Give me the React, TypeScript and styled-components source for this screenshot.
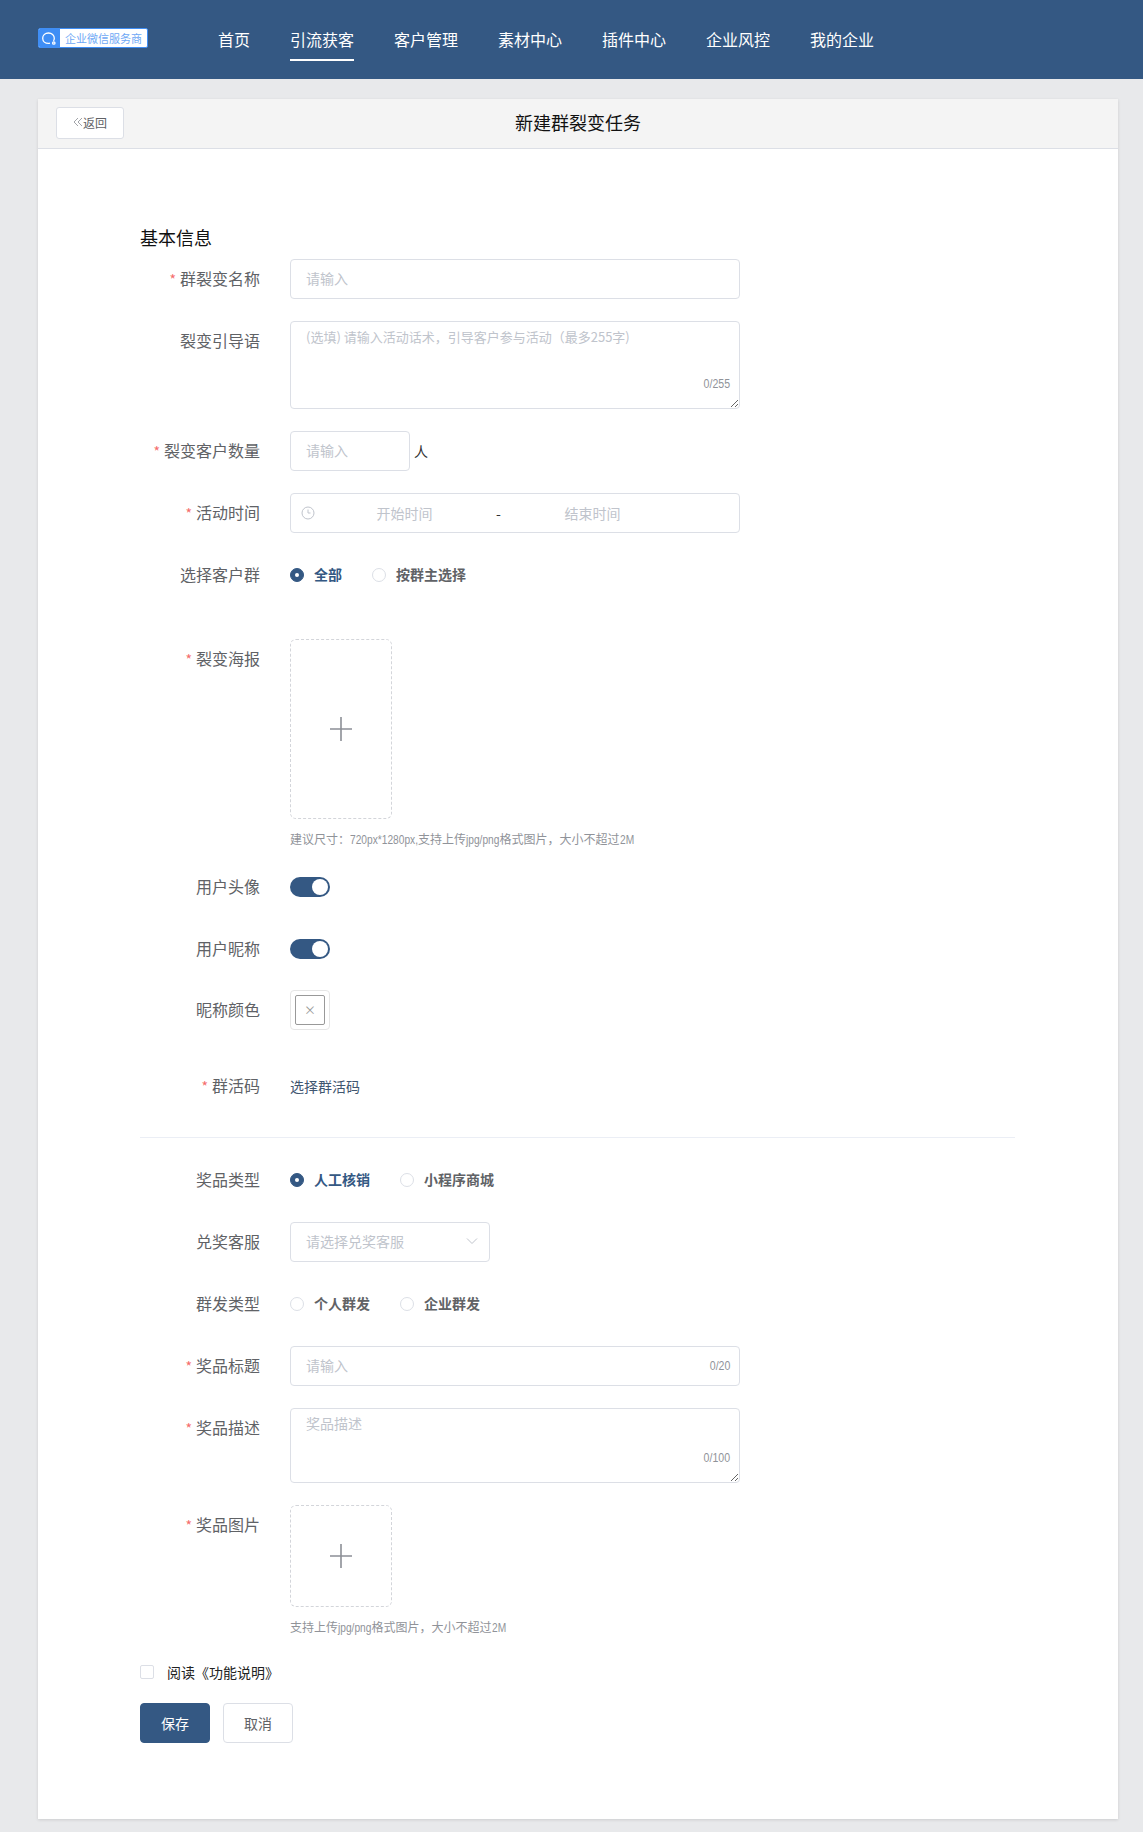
import React from 'react'
import styled, { createGlobalStyle } from 'styled-components'

const primary = '#345883'

const GlobalStyle = createGlobalStyle`
   * {
      box-sizing: border-box;
   }
   html, body {
      margin: 0;
      padding: 0;
      background: #e8e9eb;
      font-family: "Noto Sans CJK SC", "Liberation Sans", sans-serif;
   }
`

const Header = styled.header`
   height: 79px;
   background: ${primary};
   display: flex;
   align-items: flex-start;
   padding: 28px 0 0 38px;
`

const Logo = styled.div`
   width: 110px;
   height: 20px;
   display: flex;
   align-items: stretch;
   border: 1px solid #3f8ef5;
   border-radius: 2px;
   background: #fff;
   overflow: hidden;
`

const LogoIcon = styled.div`
   width: 21px;
   background: #3f8ef5;
   display: flex;
   align-items: center;
   justify-content: center;
`

const LogoText = styled.span`
   flex: 1;
   text-align: center;
   font-size: 11px;
   line-height: 18px;
   color: #6ea8f5;
   white-space: nowrap;
`

const Nav = styled.nav`
   display: flex;
   gap: 40px;
   margin: -28px 0 0 70px;
`

const NavItem = styled.a<{ $active?: boolean }>`
   height: 61px;
   padding-top: 27px;
   font-size: 16px;
   line-height: 24px;
   color: #fff;
   border-bottom: 2px solid ${(p) => (p.$active ? '#fff' : 'transparent')};
`

const Card = styled.main`
   margin: 20px 25px 13px 38px;
   height: 1720px;
   background: #fff;
   box-shadow: 0 1px 3px rgba(0, 0, 0, 0.12);
`

const CardHead = styled.div`
   position: relative;
   height: 49.5px;
   background: #f4f4f4;
   border-bottom: 1px solid #dcdfe6;
   display: flex;
   align-items: center;
   justify-content: center;
`

const BackButton = styled.button`
   position: absolute;
   left: 18px;
   top: 8px;
   width: 68px;
   height: 32px;
   background: #fff;
   border: 1px solid #dcdfe6;
   border-radius: 3px;
   font-family: inherit;
   font-size: 12px;
   color: #606266;
   padding: 0 0 2px;
   display: flex;
   align-items: center;
   justify-content: center;
   gap: 0;
`

const PageTitle = styled.h1`
   margin: -2px 0 0;
   font-size: 18px;
   font-weight: 400;
   color: #111;
`

const Form = styled.form`
   width: 875px;
   margin-left: 102px;
   padding-top: 77px;
`

const SectionTitle = styled.h2`
   margin: 0 0 9px;
   height: 24px;
   font-size: 18px;
   line-height: 22px;
   font-weight: 400;
   color: #111;
`

const Row = styled.div<{ $gap?: number }>`
   display: flex;
   gap: 30px;
   margin-bottom: ${(p) => p.$gap ?? 22}px;
`

const Label = styled.label<{ $required?: boolean }>`
   width: 120px;
   height: 40px;
   flex: none;
   text-align: right;
   font-size: 16px;
   line-height: 38px;
   color: #606266;
   white-space: nowrap;
   &::before {
      content: ${(p) => (p.$required ? '"*"' : 'none')};
      color: #f56c6c;
      font-size: 14px;
      margin-right: 4px;
   }
`

const Control = styled.div`
   flex: 1;
   min-width: 0;
   min-height: 40px;
   display: flex;
   align-items: center;
   flex-wrap: wrap;
`

const FieldBox = styled.div`
   position: relative;
   width: 450px;
`

const Input = styled.input<{ $width?: number }>`
   display: block;
   width: ${(p) => p.$width ?? 450}px;
   height: 40px;
   padding: 0 15px 2px;
   border: 1px solid #dcdfe6;
   border-radius: 4px;
   font-family: inherit;
   font-size: 14px;
   background: #fff;
   outline: none;
   &::placeholder {
      color: #c0c4cc;
      opacity: 1;
   }
`

const TextArea = styled.textarea<{ $height: number; $size?: number }>`
   display: block;
   width: 450px;
   height: ${(p) => p.$height}px;
   padding: 4px 15px;
   border: 1px solid #dcdfe6;
   border-radius: 4px;
   font-family: inherit;
   font-size: ${(p) => p.$size ?? 14}px;
   line-height: 21px;
   outline: none;
   resize: vertical;
   &::placeholder {
      color: #c0c4cc;
      opacity: 1;
   }
`

const Counter = styled.span<{ $inline?: boolean }>`
   position: absolute;
   right: 10px;
   ${(p) => (p.$inline ? 'top: 0; line-height: 40px;' : 'bottom: 17px; line-height: 16px;')}
   font-family: "Liberation Sans", sans-serif;
   font-size: 12px;
   color: #909399;
   transform: scaleX(0.88);
   transform-origin: right center;
`

const Unit = styled.span`
   margin-left: 4px;
   font-size: 14px;
   color: #333;
`

const RangeBox = styled.div`
   width: 450px;
   height: 40px;
   border: 1px solid #dcdfe6;
   border-radius: 4px;
   display: flex;
   align-items: center;
   padding: 0 10px;
`

const RangeIcon = styled.span`
   width: 16px;
   flex: none;
   display: flex;
   color: #c0c4cc;
`

const RangeText = styled.span`
   width: 175px;
   flex: none;
   text-align: center;
   font-size: 14px;
   color: #c0c4cc;
`

const RangeSep = styled.span`
   width: 13px;
   flex: none;
   text-align: center;
   font-size: 14px;
   color: #303133;
`

const RadioGroup = styled.div`
   display: flex;
   gap: 30px;
`

const RadioItem = styled.span<{ $checked?: boolean }>`
   display: flex;
   align-items: center;
   gap: 10px;
   font-size: 14px;
   font-weight: 700;
   color: ${(p) => (p.$checked ? primary : '#606266')};
`

const RadioText = styled.span`
   margin-top: -2px;
`

const RadioDot = styled.span<{ $checked?: boolean }>`
   width: 14px;
   height: 14px;
   border-radius: 50%;
   border: 1px solid ${(p) => (p.$checked ? primary : '#dcdfe6')};
   background: ${(p) => (p.$checked ? primary : '#fff')};
   display: flex;
   align-items: center;
   justify-content: center;
   &::after {
      content: '';
      width: 4px;
      height: 4px;
      border-radius: 50%;
      background: #fff;
   }
`

const Upload = styled.div<{ $height: number }>`
   width: 102px;
   height: ${(p) => p.$height}px;
   border: 1px dashed #d3d5da;
   border-radius: 6px;
   display: flex;
   align-items: center;
   justify-content: center;
   color: #8c8f96;
`

const Hint = styled.div`
   width: 100%;
   height: 20px;
   margin-top: 10px;
   font-size: 12px;
   line-height: 20px;
   color: #909399;
   white-space: nowrap;
`

const NarrowLatin = styled.span<{ $width: number }>`
   display: inline-block;
   width: ${(p) => p.$width}px;
   font-family: "Liberation Sans", sans-serif;
   transform: scaleX(0.85);
   transform-origin: left center;
`

const Switch = styled.span`
   width: 40px;
   height: 20px;
   border-radius: 10px;
   background: ${primary};
   display: flex;
   justify-content: flex-end;
   padding: 2px;
   &::after {
      content: '';
      width: 16px;
      height: 16px;
      border-radius: 50%;
      background: #fff;
   }
`

const ColorPicker = styled.div`
   width: 40px;
   height: 40px;
   padding: 4px;
   border: 1px solid #e6e6e6;
   border-radius: 4px;
`

const ColorSwatch = styled.div`
   width: 100%;
   height: 100%;
   border: 1px solid #999;
   border-radius: 2px;
   display: flex;
   align-items: center;
   justify-content: center;
   font-size: 12px;
   color: #999;
`

const LinkText = styled.span`
   font-size: 14px;
   color: #3f5670;
`

const Divider = styled.hr`
   border: none;
   border-top: 1px solid #ebeef5;
   margin: 0 0 22px;
`

const Select = styled.div`
   width: 200px;
   height: 40px;
   border: 1px solid #dcdfe6;
   border-radius: 4px;
   padding: 0 10px 2px 15px;
   display: flex;
   align-items: center;
   justify-content: space-between;
   font-size: 14px;
   color: #c0c4cc;
`

const CheckRow = styled.div`
   display: flex;
   align-items: center;
   gap: 13px;
   height: 20px;
   margin: 25px 0 21px;
   font-size: 14px;
   color: #222;
`

const CheckBox = styled.span`
   width: 14px;
   height: 14px;
   border: 1px solid #dcdfe6;
   border-radius: 2px;
`

const Actions = styled.div`
   display: flex;
   gap: 13px;
`

const Button = styled.button<{ $primary?: boolean }>`
   width: 70px;
   height: 40px;
   padding: 0;
   border-radius: 4px;
   border: 1px solid ${(p) => (p.$primary ? primary : '#dcdfe6')};
   background: ${(p) => (p.$primary ? primary : '#fff')};
   color: ${(p) => (p.$primary ? '#fff' : '#606266')};
   font-family: inherit;
   font-size: 14px;
`

const PlusIcon = () => (
   <svg width="24" height="24" viewBox="0 0 24 24" fill="none" stroke="currentColor" strokeWidth="1.6">
      <path d="M12 0v24M1 12h22" />
   </svg>
)

const navItems = ['首页', '引流获客', '客户管理', '素材中心', '插件中心', '企业风控', '我的企业']

const App: React.FC = () => {
   return (
      <>
         <GlobalStyle />
         <Header>
            <Logo>
               <LogoIcon>
                  <svg width="17" height="16" viewBox="0 0 17 16" fill="none" stroke="#fff" strokeWidth="1.3">
                     <path d="M9 13.2c-.5.1-1 .2-1.500.2-3.300 0-5.800-2.200-5.800-5.200S4.200 3 7.500 3s5.800 2.200 5.800 5.200c0 1-.3 1.900-.8 2.700" />
                     <circle cx="12.800" cy="13" r="1.200" />
                  </svg>
               </LogoIcon>
               <LogoText>企业微信服务商</LogoText>
            </Logo>
            <Nav>
               {navItems.map((item) => (
                  <NavItem key={item} $active={item === '引流获客'}>
                     {item}
                  </NavItem>
               ))}
            </Nav>
         </Header>
         <Card>
            <CardHead>
               <BackButton type="button">
                  <svg width="10" height="10" viewBox="0 0 10 10" fill="none" stroke="#8a8d93" strokeWidth="0.8">
                     <path d="M5 1L1 5l4 4M9 1L5 5l4 4" />
                  </svg>
                  返回
               </BackButton>
               <PageTitle>新建群裂变任务</PageTitle>
            </CardHead>
            <Form>
               <SectionTitle>基本信息</SectionTitle>
               <Row>
                  <Label $required>群裂变名称</Label>
                  <Control>
                     <Input placeholder="请输入" />
                  </Control>
               </Row>
               <Row>
                  <Label>裂变引导语</Label>
                  <Control>
                     <FieldBox>
                        <TextArea $height={88} $size={13} placeholder="(选填) 请输入活动话术，引导客户参与活动（最多255字)" />
                        <Counter>0/255</Counter>
                     </FieldBox>
                  </Control>
               </Row>
               <Row>
                  <Label $required>裂变客户数量</Label>
                  <Control>
                     <Input $width={120} placeholder="请输入" />
                     <Unit>人</Unit>
                  </Control>
               </Row>
               <Row>
                  <Label $required>活动时间</Label>
                  <Control>
                     <RangeBox>
                        <RangeIcon>
                           <svg width="14" height="14" viewBox="0 0 14 14" fill="none" stroke="currentColor">
                              <circle cx="7" cy="7" r="6" />
                              <path d="M7 3.500V7h2.500" />
                           </svg>
                        </RangeIcon>
                        <RangeText>开始时间</RangeText>
                        <RangeSep>-</RangeSep>
                        <RangeText>结束时间</RangeText>
                     </RangeBox>
                  </Control>
               </Row>
               <Row $gap={44}>
                  <Label>选择客户群</Label>
                  <Control>
                     <RadioGroup>
                        <RadioItem $checked>
                           <RadioDot $checked />
                           <RadioText>全部</RadioText>
                        </RadioItem>
                        <RadioItem>
                           <RadioDot />
                           <RadioText>按群主选择</RadioText>
                        </RadioItem>
                     </RadioGroup>
                  </Control>
               </Row>
               <Row $gap={18}>
                  <Label $required>裂变海报</Label>
                  <Control>
                     <Upload $height={180}>
                        <PlusIcon />
                     </Upload>
                     <Hint>
                        建议尺寸：<NarrowLatin $width={68}>720px*1280px,</NarrowLatin>支持上传
                        <NarrowLatin $width={33.5}>jpg/png</NarrowLatin>格式图片，大小不超过
                        <NarrowLatin $width={14.2}>2M</NarrowLatin>
                     </Hint>
                  </Control>
               </Row>
               <Row>
                  <Label>用户头像</Label>
                  <Control>
                     <Switch />
                  </Control>
               </Row>
               <Row $gap={21}>
                  <Label>用户昵称</Label>
                  <Control>
                     <Switch />
                  </Control>
               </Row>
               <Row $gap={36}>
                  <Label>昵称颜色</Label>
                  <Control>
                     <ColorPicker>
                        <ColorSwatch>×</ColorSwatch>
                     </ColorPicker>
                  </Control>
               </Row>
               <Row $gap={31}>
                  <Label $required>群活码</Label>
                  <Control>
                     <LinkText>选择群活码</LinkText>
                  </Control>
               </Row>
               <Divider />
               <Row>
                  <Label>奖品类型</Label>
                  <Control>
                     <RadioGroup>
                        <RadioItem $checked>
                           <RadioDot $checked />
                           <RadioText>人工核销</RadioText>
                        </RadioItem>
                        <RadioItem>
                           <RadioDot />
                           <RadioText>小程序商城</RadioText>
                        </RadioItem>
                     </RadioGroup>
                  </Control>
               </Row>
               <Row>
                  <Label>兑奖客服</Label>
                  <Control>
                     <Select>
                        请选择兑奖客服
                        <svg width="14" height="14" viewBox="0 0 14 14" fill="none" stroke="#c0c4cc">
                           <path d="M2 4.500l5 5 5-5" />
                        </svg>
                     </Select>
                  </Control>
               </Row>
               <Row>
                  <Label>群发类型</Label>
                  <Control>
                     <RadioGroup>
                        <RadioItem>
                           <RadioDot />
                           <RadioText>个人群发</RadioText>
                        </RadioItem>
                        <RadioItem>
                           <RadioDot />
                           <RadioText>企业群发</RadioText>
                        </RadioItem>
                     </RadioGroup>
                  </Control>
               </Row>
               <Row>
                  <Label $required>奖品标题</Label>
                  <Control>
                     <FieldBox>
                        <Input placeholder="请输入" />
                        <Counter $inline>0/20</Counter>
                     </FieldBox>
                  </Control>
               </Row>
               <Row>
                  <Label $required>奖品描述</Label>
                  <Control>
                     <FieldBox>
                        <TextArea $height={75} placeholder="奖品描述" />
                        <Counter>0/100</Counter>
                     </FieldBox>
                  </Control>
               </Row>
               <Row $gap={0}>
                  <Label $required>奖品图片</Label>
                  <Control>
                     <Upload $height={102}>
                        <PlusIcon />
                     </Upload>
                     <Hint>
                        支持上传<NarrowLatin $width={33.5}>jpg/png</NarrowLatin>格式图片，大小不超过
                        <NarrowLatin $width={14.2}>2M</NarrowLatin>
                     </Hint>
                  </Control>
               </Row>
               <CheckRow>
                  <CheckBox />
                  阅读《功能说明》
               </CheckRow>
               <Actions>
                  <Button type="button" $primary>
                     保存
                  </Button>
                  <Button type="button">取消</Button>
               </Actions>
            </Form>
         </Card>
      </>
   )
}

export default App
